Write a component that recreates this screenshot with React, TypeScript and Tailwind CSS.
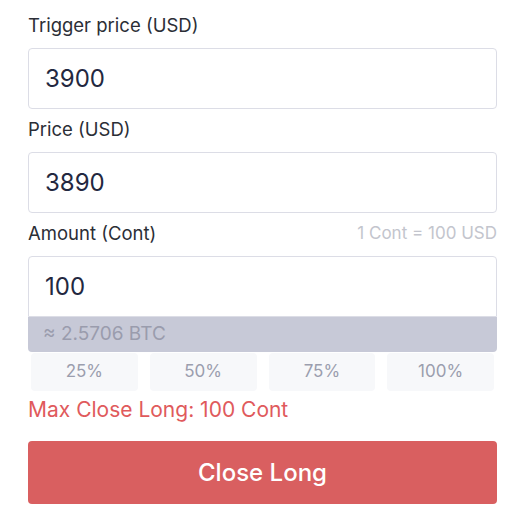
import React from 'react';

const fields = [
  { label: 'Trigger price (USD)', value: '3900' },
  { label: 'Price (USD)', value: '3890' },
];

const pcts = ['25%', '50%', '75%', '100%'];

const Label: React.FC<{ text: string; hint?: string }> = ({ text, hint }) => (
  <div className="h-[43px] flex items-center justify-between pb-[2px]">
    <span className="text-[18.5px] text-[#2b2e36]">{text}</span>
    {hint && <span className="text-[17px] text-[#c3c5cd]">{hint}</span>}
  </div>
);

const App: React.FC = () => {
  return (
    <div
      className="w-[531px] h-[529px] bg-white pt-[5px]"
      style={{ fontFamily: 'Inter, "Liberation Sans", sans-serif' }}
    >
      <div className="ml-[28px] w-[469px]">
        {fields.map((f) => (
          <div key={f.label}>
            <Label text={f.label} />
            <div className="h-[61px] border border-[#dcdde6] rounded-[4px] flex items-center px-[16px]">
              <span className="text-[24px] text-[#232840]">{f.value}</span>
            </div>
          </div>
        ))}

        <Label text="Amount (Cont)" hint="1 Cont = 100 USD" />
        <div className="h-[61px] border border-[#dcdde6] rounded-t-[4px] flex items-center px-[16px]">
          <span className="text-[24px] text-[#232840]">100</span>
        </div>
        <div className="h-[35px] bg-[#c7c9d7] rounded-b-[4px] flex items-center px-[15px]">
          <span className="text-[19px] text-[#9a9cad]">≈ 2.5706 BTC</span>
        </div>

        <div className="grid grid-cols-4 gap-[12px] px-[3px] mt-[1px]">
          {pcts.map((p) => (
            <button
              key={p}
              className="h-[38px] bg-[#f7f8fa] rounded-[4px] text-[17px] text-[#9b9eae] flex items-center justify-center"
            >
              {p}
            </button>
          ))}
        </div>

        <div className="h-[37px] flex items-center text-[21px] text-[#e05a5c]">
          Max Close Long: 100 Cont
        </div>

        <button className="mt-[13px] w-full h-[63px] bg-[#d95f60] rounded-[4px] text-white text-[24px] font-medium flex items-center justify-center">
          Close Long
        </button>
      </div>
    </div>
  );
};

export default App;
